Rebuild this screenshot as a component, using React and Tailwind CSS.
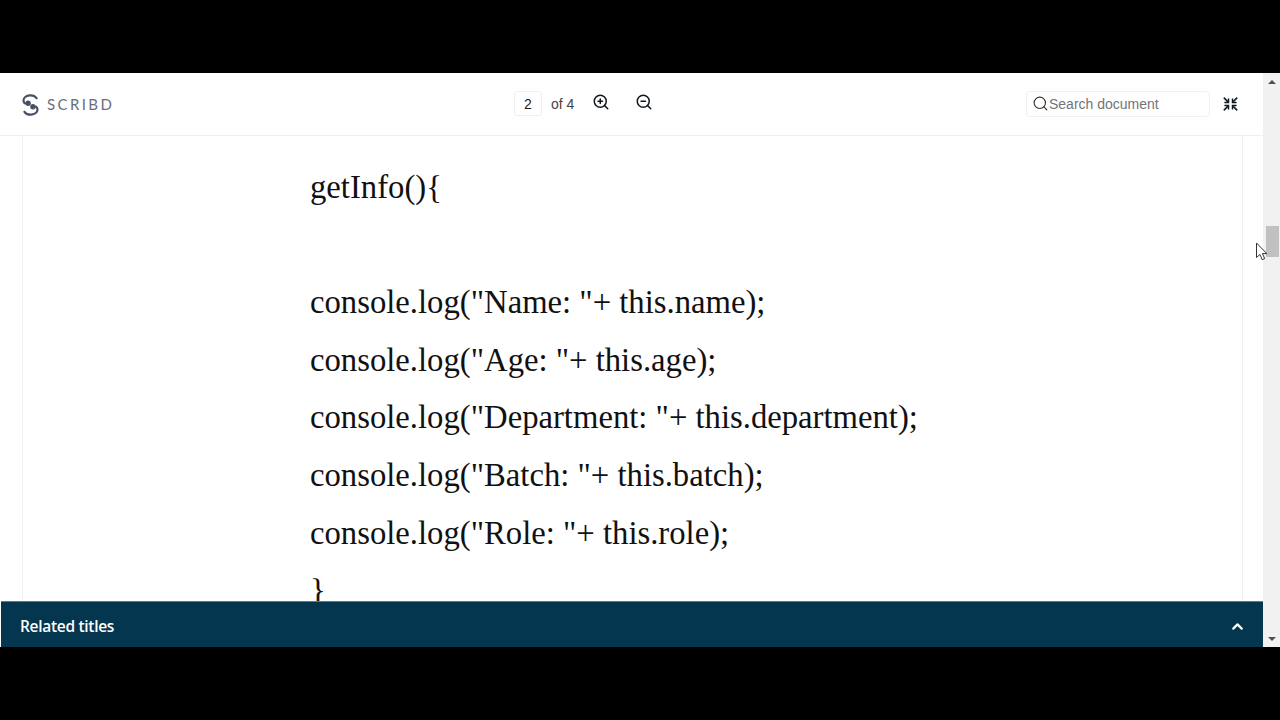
import React from 'react';
import { Search, ZoomIn, ZoomOut, ChevronUp } from 'lucide-react';

const LINES = [
  'getInfo(){',
  '\u00a0',
  'console.log("Name: "+ this.name);',
  'console.log("Age: "+ this.age);',
  'console.log("Department: "+ this.department);',
  'console.log("Batch: "+ this.batch);',
  'console.log("Role: "+ this.role);',
  '}',
];

const ScribdLogo = () => (
  <svg width="19" height="22" viewBox="0 0 18 22" fill="none">
    <path d="M15 4.2C13.6 2 11 1.2 8.2 1.4 4.6 1.7 2 3.7 2 6.4c0 1.2.6 2.2 1.5 3" stroke="#4a4f63" strokeWidth="2.2" strokeLinecap="round" />
    <path d="M3 17.8c1.4 2.2 4 3 6.8 2.8 3.6-.3 6.2-2.3 6.2-5 0-1.2-.6-2.2-1.5-3" stroke="#4a4f63" strokeWidth="2.2" strokeLinecap="round" />
    <circle cx="6.6" cy="9.2" r="2.7" fill="#4a4f63" />
    <circle cx="11.4" cy="12.8" r="2.7" fill="#4a4f63" />
  </svg>
);

const CollapseIcon = () => (
  <svg width="15" height="14" viewBox="0 0 15 14" fill="none" stroke="#10181f" strokeWidth="1.5">
    <path d="M.8.6l4 4" />
    <path d="M5.5 1.4v4.1H1.4" />
    <path d="M14.2.6l-4 4" />
    <path d="M9.5 1.4v4.1h4.1" />
    <path d="M.8 13.4l4-4" />
    <path d="M5.5 12.6V8.5H1.4" />
    <path d="M14.2 13.4l-4-4" />
    <path d="M9.5 12.6V8.5h4.1" />
  </svg>
);

const Header = () => (
  <div className="h-[63px] shrink-0 flex items-center bg-white border-b border-[#efefef] relative font-['Liberation_Sans',sans-serif]">
    <div className="flex items-center ml-[21px] w-[493px] mt-[1px]">
      <ScribdLogo />
      <span className="ml-[7px] text-[15px] tracking-[2.4px] text-[#6a6e7c] font-['Lato',sans-serif]">SCRIBD</span>
    </div>
    <div className="flex items-center -mt-[1px]">
      <div className="w-[28px] h-[25px] border border-[#f0f0f0] rounded-[3px] flex items-center justify-center text-[14px] text-[#1b1b1b] pt-[1px]">2</div>
      <span className="ml-[9px] mt-[2px] text-[14px] text-[#444]">of 4</span>
      <ZoomIn size={18} strokeWidth={2} className="ml-[18px] -mt-[3px] text-[#10181f]" />
      <ZoomOut size={18} strokeWidth={2} className="ml-[25px] -mt-[3px] text-[#10181f]" />
    </div>
    <div className="ml-auto flex items-center -mt-[1px]">
      <div className="w-[184px] h-[26px] border border-[#f0f0f0] rounded-[3px] flex items-center pl-[5px]">
        <Search size={17} strokeWidth={1.6} className="text-[#333]" />
        <span className="mt-[1px] text-[14px] text-[#70757a]">Search document</span>
      </div>
      <div className="ml-[13px] mr-[25px]"><CollapseIcon /></div>
    </div>
  </div>
);

const Page = () => (
  <div className="flex-1 min-h-0 overflow-hidden ml-[22px] mr-[20px] bg-white border-x border-[#f0f0f0] pl-[287px] pt-[23px] font-['Liberation_Serif',serif] text-[32.7px] leading-[57.6px] text-[#111]">
    {LINES.map((line, i) => (
      <div key={i} className="whitespace-nowrap">{line}</div>
    ))}
  </div>
);

const RelatedBar = () => (
  <div className="h-[46px] shrink-0 ml-[1px] bg-[#04364f] border-t border-[#5b7c90] flex items-center justify-between pl-[19px] pr-[17px] pt-[3px]">
    <span className="text-white text-[15.5px] font-semibold font-['Open_Sans',sans-serif] tracking-[-0.3px] mt-[1px]">Related titles</span>
    <ChevronUp size={17} strokeWidth={3} className="text-white" />
  </div>
);

const Scrollbar = () => (
  <div className="w-[17px] shrink-0 bg-[#f1f1f1] flex flex-col items-center">
    <div className="h-[17px] flex items-center justify-center">
      <div className="w-0 h-0 border-x-[4px] border-x-transparent border-b-[4px] border-b-[#505050]" />
    </div>
    <div className="w-[13px] h-[31px] mt-[136px] bg-[#c1c1c1] ml-[1px]" />
    <div className="mt-auto h-[17px] flex items-center justify-center">
      <div className="w-0 h-0 border-x-[4px] border-x-transparent border-t-[4px] border-t-[#505050]" />
    </div>
  </div>
);

export default function App() {
  return (
    <div className="w-[1280px] h-[720px] bg-black flex flex-col overflow-hidden">
      <div className="h-[73px] shrink-0" />
      <div className="h-[574px] shrink-0 flex relative bg-white">
        <div className="flex-1 min-w-0 flex flex-col">
          <Header />
          <Page />
          <RelatedBar />
        </div>
        <Scrollbar />
        {/* mouse pointer caught in the recording */}
        <svg className="absolute left-[1255px] top-[169px]" width="13" height="20" viewBox="0 0 13 20">
          <path d="M1.5 1v14.5l3.4-3 2.3 5.2 2.5-1.1-2.3-5h4.4z" fill="#fff" stroke="#333" strokeWidth="1" />
        </svg>
      </div>
    </div>
  );
}
